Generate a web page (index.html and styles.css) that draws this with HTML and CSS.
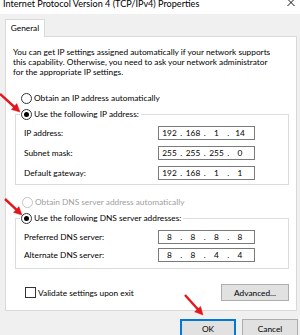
FILE: index.html
```html
<!DOCTYPE html>
<html>
<head>
<meta charset="utf-8">
<link rel="stylesheet" href="styles.css">
</head>
<body>
<div class="window">
  <div class="titlebar">
    <span class="title">Internet Protocol Version 4 (TCP/IPv4) Properties</span>
    <svg class="close" width="8" height="8" viewBox="0 0 8 8"><path d="M0.5 0 L7.5 7 M7.5 0 L0.5 7" stroke="#000" stroke-width="0.9" fill="none"/></svg>
  </div>
  <div class="tabs"><div class="tab">General</div></div>
  <div class="panel">
    <p class="intro">You can get IP settings assigned automatically if your network supports<br>this capability. Otherwise, you need to ask your network administrator<br>for the appropriate IP settings.</p>
    <div class="option first"><span class="radio"></span>Obtain an IP address automatically</div>
    <fieldset class="group">
      <legend><span class="radio checked"></span>Use the following IP address:</legend>
      <div class="fields">
        <div class="field"><span class="label">IP address:</span><span class="ipbox"><span class="seg">192</span><span class="dot">.</span><span class="seg">168</span><span class="dot">.</span><span class="seg">1</span><span class="dot">.</span><span class="seg">14</span></span></div>
        <div class="field"><span class="label">Subnet mask:</span><span class="ipbox"><span class="seg">255</span><span class="dot">.</span><span class="seg">255</span><span class="dot">.</span><span class="seg">255</span><span class="dot">.</span><span class="seg">0</span></span></div>
        <div class="field"><span class="label">Default gateway:</span><span class="ipbox"><span class="seg">192</span><span class="dot">.</span><span class="seg">168</span><span class="dot">.</span><span class="seg">1</span><span class="dot">.</span><span class="seg">1</span></span></div>
      </div>
    </fieldset>
    <div class="option second disabled"><span class="radio"></span>Obtain DNS server address automatically</div>
    <fieldset class="group dns">
      <legend><span class="radio checked"></span>Use the following DNS server addresses:</legend>
      <div class="fields">
        <div class="field"><span class="label">Preferred DNS server:</span><span class="ipbox"><span class="seg">8</span><span class="dot">.</span><span class="seg">8</span><span class="dot">.</span><span class="seg">8</span><span class="dot">.</span><span class="seg">8</span></span></div>
        <div class="field"><span class="label">Alternate DNS server:</span><span class="ipbox"><span class="seg">8</span><span class="dot">.</span><span class="seg">8</span><span class="dot">.</span><span class="seg">4</span><span class="dot">.</span><span class="seg">4</span></span></div>
      </div>
    </fieldset>
    <div class="bottom">
      <div class="check"><span class="box"></span>Validate settings upon exit</div>
      <button class="btn advanced">Advanced...</button>
    </div>
  </div>
  <div class="footer">
    <button class="btn ok">OK</button>
    <button class="btn">Cancel</button>
  </div>
  <svg class="arrows" width="300" height="335" viewBox="0 0 300 335">
    <g fill="#e3161b" stroke="#e3161b">
      <line x1="0" y1="94" x2="15" y2="107.5" stroke-width="2.4"/>
      <polygon points="20,112 11.4,109.6 16.8,103.6" stroke-width="0.5"/>
      <line x1="5" y1="199" x2="17.5" y2="210.7" stroke-width="2.4"/>
      <polygon points="22,215 13.5,212.4 18.9,206.6" stroke-width="0.5"/>
      <line x1="185" y1="295" x2="198.5" y2="310" stroke-width="2.4"/>
      <polygon points="203,315 194.6,311.8 200.6,306.4" stroke-width="0.5"/>
    </g>
  </svg>
</div>
</body>
</html>
```

FILE: styles.css
```css
body {
  margin: 0;
  background: #f0f0f0;
  font-family: Lato, "Noto Sans", sans-serif;
  font-size: 8.3px;
  color: #000;
}
.window {
  position: relative;
  width: 300px;
  height: 335px;
  overflow: hidden;
}
.titlebar {
  height: 14px;
  background: #fff;
  display: flex;
  justify-content: space-between;
  align-items: flex-start;
}
.title {
  margin: -1px 0 0 3px;
  line-height: 10px;
  font-size: 9.1px;
}
.close {
  margin: -1px 5px 0 0;
}
.tabs {
  padding: 5px 0 0 5px;
  display: flex;
}
.tab {
  position: relative;
  z-index: 1;
  width: 40px;
  height: 18px;
  box-sizing: border-box;
  border: 1px solid #d9d9d9;
  border-bottom: 0;
  background: #fff;
  margin-bottom: -1px;
  text-align: center;
  line-height: 17px;
}
.panel {
  margin: 0 3px 0 5px;
  height: 275px;
  box-sizing: border-box;
  border: 1px solid #d9d9d9;
  background: #fff;
  padding-top: 10px;
}
.intro {
  margin: 0 0 0 7px;
  line-height: 10px;
}
.option {
  display: flex;
  align-items: center;
  gap: 2px;
  height: 12px;
  margin-left: 15px;
}
.option.first { margin-top: 15px; }
.option.second { margin-top: 11px; margin-left: 16px; }
.option.disabled { color: #a0a0a0; }
.option.disabled .radio { border-color: #c4c4c4; }
.radio {
  width: 11px;
  height: 11px;
  box-sizing: border-box;
  border: 1px solid #333;
  border-radius: 50%;
  background: #fff;
  display: flex;
  align-items: center;
  justify-content: center;
}
.radio.checked::after {
  content: "";
  width: 5px;
  height: 5px;
  border-radius: 50%;
  background: #000;
}
.group {
  margin: 4px 7px 0 9px;
  border: 1px solid #dcdcdc;
  padding: 0 8px 4px 8px;
  min-width: 0;
}
.group legend {
  display: flex;
  align-items: center;
  gap: 2px;
  height: 12px;
  padding: 0 2px 0 1px;
  margin-left: -4px;
}
.fields {
  display: flex;
  flex-direction: column;
  gap: 6px;
  padding-top: 6px;
}
.group.dns { padding-bottom: 6px; }
.group.dns .fields { gap: 4px; }
.field {
  display: flex;
  align-items: center;
  height: 14px;
}
.label {
  width: 134px;
  flex: none;
}
.ipbox {
  display: flex;
  align-items: center;
  width: 97px;
  height: 14px;
  box-sizing: border-box;
  border: 1px solid #7a7a7a;
  padding-left: 1px;
}
.seg {
  width: 19px;
  text-align: center;
}
.dot {
  width: 4.5px;
  text-align: center;
}
.bottom {
  display: flex;
  justify-content: space-between;
  align-items: center;
  margin: 15px 7px 0 19px;
  height: 17px;
}
.check {
  display: flex;
  align-items: center;
  gap: 2px;
}
.box {
  width: 11px;
  height: 11px;
  box-sizing: border-box;
  border: 1px solid #333;
  background: #fff;
}
.btn {
  font: inherit;
  color: #000;
  background: #e1e1e1;
  border: 1px solid #adadad;
  padding: 0;
  margin: 0;
}
.advanced {
  width: 68px;
  height: 17px;
}
.footer {
  display: flex;
  justify-content: flex-end;
  gap: 6px;
  padding: 8px 2px 0 0;
}
.footer .btn {
  width: 56px;
  height: 20px;
}
.btn.ok {
  border-color: #0078d7;
  box-shadow: inset 0 0 0 1px #0078d7;
}
.arrows {
  position: absolute;
  left: 0;
  top: 0;
  pointer-events: none;
}
```
